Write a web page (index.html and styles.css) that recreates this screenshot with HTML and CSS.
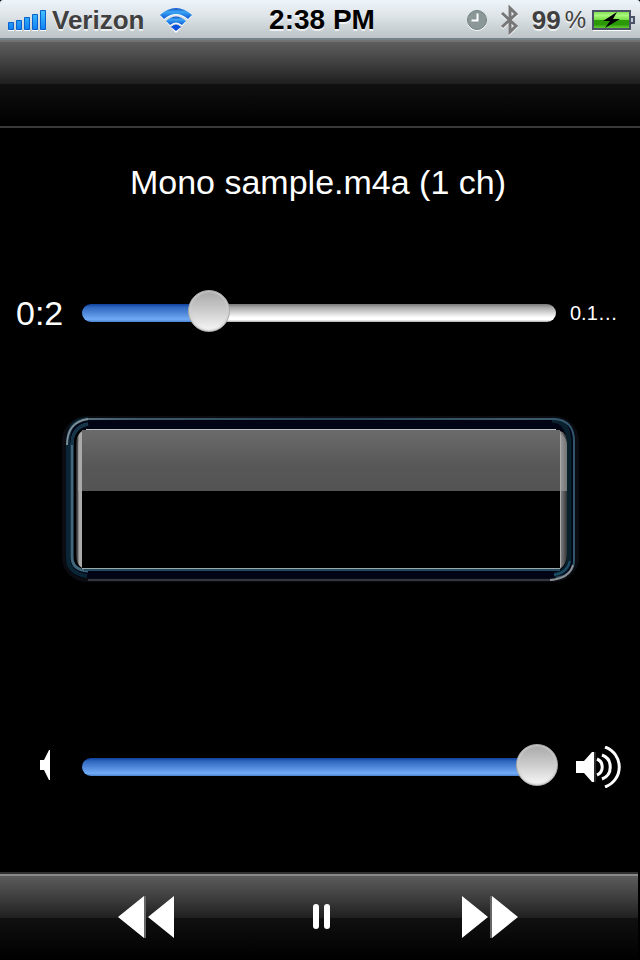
FILE: index.html
```html
<!DOCTYPE html>
<html lang="en">
<head>
<meta charset="utf-8">
<meta name="viewport" content="width=device-width, initial-scale=1">
<title>Audio player</title>
<link rel="stylesheet" href="styles.css">
</head>
<body>
<div class="screen">
  <header class="status">
    <div class="status-side">
      <svg class="signal" width="40" height="24" viewBox="0 0 40 24" role="img" aria-label="Signal strength">
        <defs>
          <linearGradient id="bar" x1="0" y1="0" x2="0" y2="24" gradientUnits="userSpaceOnUse"><stop offset="0" stop-color="#4cccff"/><stop offset="1" stop-color="#0878f0"/></linearGradient>
        </defs>
        <path d="M0 22h6v1H0zM8 22h6v1H8zM16 22h6v1h-6zM24 22h6v1h-6zM32 22h6v1h-6z" fill="#fff"/>
        <g fill="url(#bar)" stroke="#0861cf" stroke-width="1">
          <path d="M.5 14.5h5v7h-5zM8.500 12.500h5v9h-5zM16.500 9.500h5v12h-5zM24.500 6.500h5v15h-5zM32.500 2.500h5v19h-5z"/>
        </g>
      </svg>
      <span class="carrier">Verizon</span>
      <svg class="wifi" width="34" height="26" viewBox="0 0 34 26" role="img" aria-label="Wi-Fi">
        <defs>
          <linearGradient id="wave" x1="0" y1="0" x2="0" y2="1"><stop offset="0" stop-color="#1250c8"/><stop offset=".35" stop-color="#3ba5f2"/><stop offset="1" stop-color="#0c58d8"/></linearGradient>
        </defs>
        <g fill="#fff" transform="translate(0 1)">
          <path d="M1 8Q17-6 33 8L29 12Q17 2 5 12Z"/>
          <path d="M7 14Q17 5 27 14L23 18Q17 13 11 18Z"/>
          <path d="M12 20Q17 15 22 20L17 25Z"/>
        </g>
        <path d="M1 8Q17-6 33 8L29 12Q17 2 5 12Z" fill="url(#wave)"/>
        <path d="M7 14Q17 5 27 14L23 18Q17 13 11 18Z" fill="url(#wave)"/>
        <path d="M12 20Q17 15 22 20L17 24Z" fill="#0a50dc"/>
      </svg>
    </div>
    <time class="clock">2:38 PM</time>
    <div class="status-side status-end">
      <svg width="22" height="24" viewBox="0 0 22 24" role="img" aria-label="Alarm">
        <circle cx="11" cy="13" r="10" fill="#fff"/>
        <circle cx="11" cy="12" r="9.500" fill="#8c9898" stroke="#718080"/>
        <path d="M11.500 5.500V12.500H5.500" fill="none" stroke="#fff" stroke-width="2"/>
      </svg>
      <svg class="bluetooth" width="20" height="34" viewBox="0 0 20 34" role="img" aria-label="Bluetooth">
        <path d="M2 11L16 24L10 30V6L16 12L2 25" fill="none" stroke="#fff" stroke-width="3"/>
        <path d="M2 10L16 23L10 29V5L16 11L2 24" fill="none" stroke="#777" stroke-width="3"/>
      </svg>
      <span class="percent">99<span class="percent-sign">%</span></span>
      <svg width="44" height="24" viewBox="0 0 44 24" role="img" aria-label="Battery charging">
        <defs>
          <linearGradient id="charge" x1="0" y1="0" x2="0" y2="1"><stop offset="0" stop-color="#78dc48"/><stop offset=".25" stop-color="#a9f77c"/><stop offset=".48" stop-color="#78dd43"/><stop offset=".5" stop-color="#2c9908"/><stop offset=".75" stop-color="#2a9907"/><stop offset="1" stop-color="#75db42"/></linearGradient>
        </defs>
        <path d="M1 22h38v1H1z" fill="#fff"/>
        <rect x="1" y="3" width="37" height="18" fill="url(#charge)" stroke="#4b5268" stroke-width="2"/>
        <path d="M39 9h3v6h-3" fill="#c5cfd5" stroke="#4b5268" stroke-width="2"/>
        <path d="M25 4L11 13H18L13 20L28 11H21Z" fill="#000"/>
      </svg>
    </div>
  </header>
  <div class="navbar"></div>

  <main class="player">
    <h1 class="title">Mono sample.m4a (1 ch)</h1>

    <div class="row">
      <span class="elapsed">0:2</span>
      <div class="track track-position"><input type="range" min="0" max="1000" value="248" aria-label="Playback position"></div>
      <span class="remaining">0.1…</span>
    </div>

    <svg class="display" viewBox="0 0 520 170" role="img" aria-label="Level display">
      <defs>
        <linearGradient id="gloss" x1="0" y1="0" x2="0" y2="1"><stop offset="0" stop-color="#6b6b6b"/><stop offset=".6" stop-color="#575757"/><stop offset="1" stop-color="#545454"/></linearGradient>
        <linearGradient id="edgeL" x1="0" y1="0" x2="1" y2="0"><stop offset="0" stop-color="#202020"/><stop offset=".3" stop-color="#555"/><stop offset=".5" stop-color="#aaa"/><stop offset="1" stop-color="#aaa"/></linearGradient>
        <linearGradient id="edgeR" x1="0" y1="0" x2="1" y2="0"><stop offset="0" stop-color="#aaa"/><stop offset=".2" stop-color="#777"/><stop offset="1" stop-color="#303437"/></linearGradient>
        <linearGradient id="rim" x1="0" y1="0" x2="1" y2="0"><stop offset="0" stop-color="#56707c"/><stop offset=".1" stop-color="#3f5a68"/><stop offset=".5" stop-color="#27465a"/><stop offset=".9" stop-color="#3f5a68"/><stop offset="1" stop-color="#31566b"/></linearGradient>
      </defs>
      <rect x="4" y="3" width="513" height="162" rx="23" fill="none" stroke="#0a0c12" stroke-width="4"/>
      <rect x="6" y="3" width="509" height="160" rx="20" fill="#000414"/>
      <path d="M28 4Q8 5 8 27V143Q8 158 27 161" fill="none" stroke="#0a2636" stroke-width="4"/>
      <path d="M492 5Q509 6 509 28V143Q509 157 494 160" fill="none" stroke="#09202d" stroke-width="5"/>
      <path d="M26 4H494Q514 5 514 26V145Q514 160 496 163" fill="none" stroke="url(#rim)" stroke-width="2"/>
      <path d="M7 30Q7 7 28 4" fill="none" stroke="#7d8c94" stroke-width="2"/>
      <path d="M28 9Q12 12 12 30V142Q12 155 28 156" fill="none" stroke="#41677b" stroke-width="3"/>
      <path d="M28 9Q12 12 12 30" fill="none" stroke="#153447" stroke-width="3"/>
      <rect x="14" y="14" width="493" height="140" rx="12" fill="#000"/>
      <path d="M16 30Q16 20 22 16V153Q16 149 16 140Z" fill="url(#edgeL)"/>
      <path d="M500 16Q507 18 507 28V139Q507 149 500 154Z" fill="url(#edgeR)"/>
      <path d="M22 15H500V76H22Z" fill="url(#gloss)"/>
      <path d="M18 28L22 20V76H18Z" fill="#aaa" opacity=".55"/>
      <path d="M500 18Q507 23 507 30V76H500Z" fill="#aaa" opacity=".55"/>
      <path d="M26 14.500H496" stroke="#b8c0c0"/>
      <path d="M500.500 20V152" stroke="#aaa"/>
      <path d="M22 153.500H500" stroke="#9aa8ac"/>
      <path d="M24 155H500" stroke="#25495c" stroke-width="2"/>
      <path d="M28 165H494" stroke="#34343e" stroke-width="2"/>
      <path d="M490 165Q509 164 513 150" fill="none" stroke="#8c9094" stroke-width="2"/>
      <path d="M494 160Q507 158 510 146" fill="none" stroke="#1c5069" stroke-width="2"/>
    </svg>

    <div class="row">
      <svg class="quiet" width="10" height="34" viewBox="0 0 10 34" aria-hidden="true"><path d="M0 10H4L9 0H10V30H9L4 20H0Z" fill="#fff"/></svg>
      <div class="track track-volume"><input type="range" min="0" max="100" value="100" aria-label="Volume"></div>
      <svg class="loud" width="46" height="42" viewBox="0 0 46 42" aria-hidden="true">
        <path d="M0 15H8L16 6H18V36H16L8 27H0Z" fill="#fff"/>
        <path d="M19 6V36" stroke="#555"/>
        <path d="M21 13C28 16 28 26 21 29M26 9C37 13 37 29 26 33M29 1C48 8 48 34 29 41" fill="none" stroke="#fff" stroke-width="3"/>
      </svg>
    </div>
  </main>

  <footer class="toolbar">
    <button type="button" aria-label="Rewind"><svg width="56" height="42" viewBox="0 0 56 42"><path d="M0 21L26 0V42ZM30 21L56 0V42Z" fill="#fff"/><path d="M27 0V42" stroke="#666" stroke-width="2"/></svg></button>
    <button type="button" aria-label="Pause"><svg width="56" height="42" viewBox="0 0 56 42"><rect x="23" y="8" width="6" height="25" rx="3" fill="#fff"/><rect x="34" y="8" width="6" height="25" rx="3" fill="#fff"/></svg></button>
    <button type="button" aria-label="Fast forward"><svg width="56" height="42" viewBox="0 0 56 42"><path d="M0 0L26 21L0 42ZM30 0L56 21L30 42Z" fill="#fff"/><path d="M29 0V42" stroke="#666" stroke-width="2"/></svg></button>
  </footer>
</div>
</body>
</html>
```
FILE: styles.css
```css
* { box-sizing: border-box; }

body {
  margin: 0;
  background: #000;
  color: #fff;
  font-family: "Liberation Sans", Arial, sans-serif;
}

svg { display: block; flex: none; }

.screen {
  display: flex;
  flex-direction: column;
  min-height: 100vh;
}

.status {
  display: flex;
  align-items: center;
  height: 40px;
  padding: 2px 4px 0 8px;
  border-bottom: 2px solid #748187;
  border-radius: 3px 3px 0 0;
  background: linear-gradient(#eef5fa, #dce2e6 45%, #bcc4c8);
  color: #404040;
  font-size: 26px;
  font-weight: bold;
  line-height: 36px;
  text-shadow: 0 2px 0 rgba(255, 255, 255, 0.7);
}

.status-side {
  display: flex;
  flex: 1;
  align-items: center;
}

.status-end { justify-content: flex-end; }
.signal { margin-right: 4px; }
.carrier { margin-right: 15px; }
.clock { color: #000; font-size: 28px; }
.bluetooth { margin: 0 12px; }
.percent { display: flex; margin-right: 6px; }
.percent-sign { margin-left: 4px; font-size: 24px; font-weight: normal; }

.navbar,
.toolbar {
  height: 88px;
  background: linear-gradient(#5e5e5e, #404040 50%, #1f1f1f) top / 100% 44px no-repeat,
    linear-gradient(#101010, #000) bottom / 100% 42px no-repeat;
}

.navbar {
  border-top: 2px solid #737373;
  border-bottom: 2px solid #393939;
  background-size: 100% 42px, 100% 42px;
}

.player {
  display: flex;
  flex: 1;
  flex-direction: column;
}

.title {
  margin: 32px 4px 0 0;
  font-size: 34px;
  font-weight: normal;
  line-height: 44px;
  text-align: center;
}

.row {
  display: grid;
  grid-template-columns: 66px 1fr 52px;
  column-gap: 16px;
  align-items: center;
  height: 42px;
  padding-right: 16px;
}

.title + .row { margin-top: 88px; }
.display { margin: 81px 60px 0; }
.display + .row { margin-top: 161px; }

.elapsed {
  padding-left: 16px;
  font-size: 34px;
  line-height: 42px;
}

.remaining {
  margin-left: -2px;
  font-size: 20px;
  line-height: 42px;
  white-space: nowrap;
}

.track {
  height: 18px;
  border-radius: 9px;
  background: linear-gradient(#0f429c, #2e67bf 18%, #71aaf5 85%, #4b83d0) left / 25% 100% no-repeat,
    linear-gradient(#777, #aaa 20%, #fff 75%, #fff 88%, #aaa);
}

.track-volume { background-size: 97% 100%, 0 0; }

.track input {
  display: block;
  width: calc(100% + 4px);
  height: 18px;
  margin: 0 -2px;
  appearance: none;
  background: none;
}

.track input::-webkit-slider-runnable-track {
  height: 18px;
}

.track input::-webkit-slider-thumb {
  width: 42px;
  height: 42px;
  margin-top: -14px;
  appearance: none;
  border: 1px solid #aaa;
  border-radius: 50%;
  background: linear-gradient(#a8a8a8, #cdcdcd 50%, #f8f8f8);
  box-shadow: inset 0 0 2px 1px #d0d0d0;
}

.quiet { margin-left: 40px; }
.loud { margin-left: 4px; }

.toolbar {
  display: flex;
  align-items: center;
  justify-content: space-between;
  margin-right: 2px;
  padding: 0 120px 0 118px;
  border-top: 2px solid #303030;
  box-shadow: inset 0 2px 0 #888;
}

.toolbar button {
  padding: 0;
  border: 0;
  background: none;
}
```
